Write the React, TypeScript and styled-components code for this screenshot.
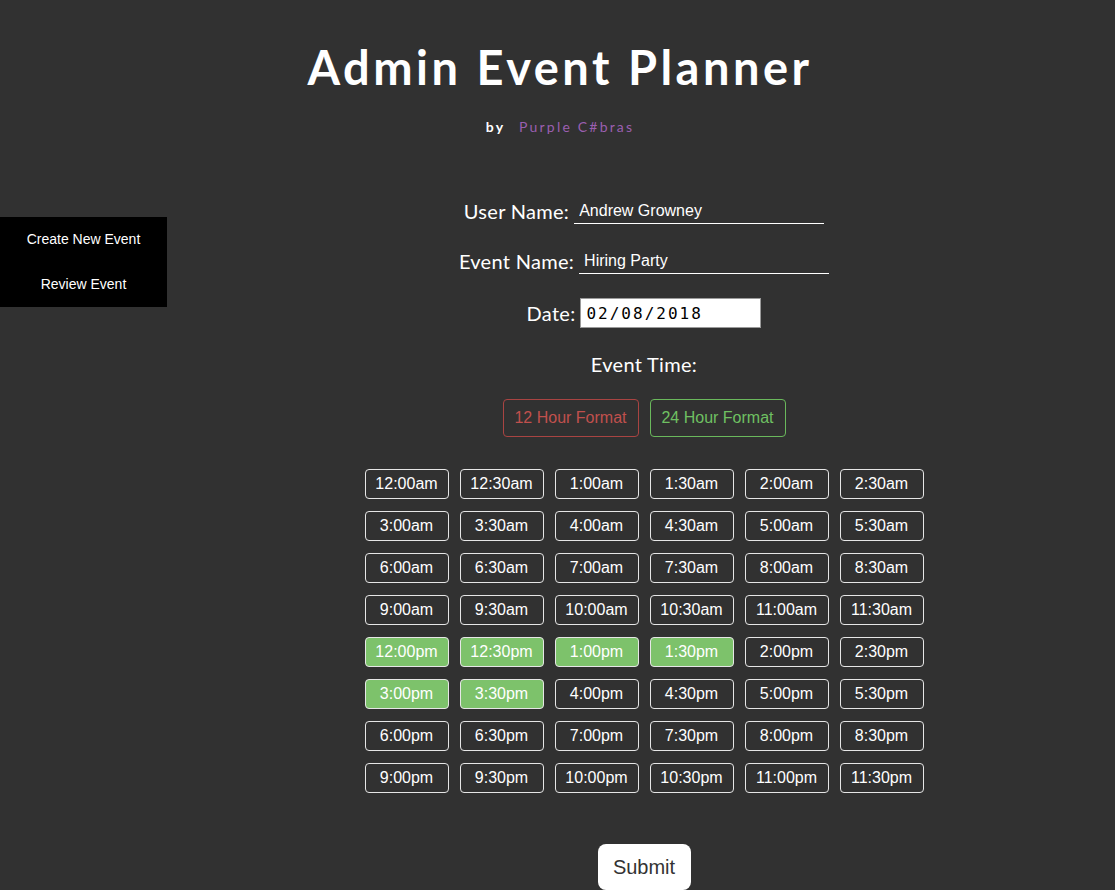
import React from "react";
import styled, { createGlobalStyle } from "styled-components";

const GlobalStyle = createGlobalStyle`
  html, body {
    margin: 0;
    padding: 0;
    background: #313131;
  }
  body {
    font-family: "Liberation Sans", Arial, sans-serif;
    color: #ffffff;
    min-height: 890px;
  }
`;

const Page = styled.div`
  width: 100%;
  min-height: 890px;
  background: #313131;
  overflow: hidden;
`;

const Header = styled.header`
  display: flex;
  flex-direction: column;
  align-items: center;
  padding: 38px 0 0 5px;
`;

const Title = styled.h1`
  margin: 0;
  font-family: "Lato", "Noto Sans", sans-serif;
  font-weight: 700;
  font-size: 47px;
  line-height: 58px;
  letter-spacing: 3.5px;
  color: #ffffff;
`;

const Byline = styled.p`
  margin: 22px 0 0 0;
  font-family: "Lato", "Noto Sans", sans-serif;
  font-size: 14px;
  font-weight: 700;
  letter-spacing: 2.2px;
  line-height: 18px;
  color: #ffffff;
`;

const Team = styled.span`
  margin-left: 8px;
  color: #9b5fb0;
  font-weight: 400;
`;

const Body = styled.div`
  display: flex;
  align-items: flex-start;
  margin-top: 62px;
`;

const Sidebar = styled.nav`
  width: 167px;
  flex: none;
  margin-top: 19px;
  background: #000000;
  display: flex;
  flex-direction: column;
`;

const NavItem = styled.a`
  display: block;
  height: 45px;
  line-height: 45px;
  text-align: center;
  font-family: "Liberation Sans", Arial, sans-serif;
  font-size: 14px;
  color: #ffffff;
  text-decoration: none;
  cursor: pointer;
`;

const Main = styled.main`
  flex: 1;
  padding-left: 6px;
  display: flex;
  flex-direction: column;
  align-items: center;
`;

const FieldRow = styled.div<{ $gap: number }>`
  display: flex;
  align-items: center;
  margin-top: ${(p) => p.$gap}px;
`;

const Label = styled.label`
  font-family: "Lato", "Noto Sans", sans-serif;
  font-size: 20px;
  letter-spacing: 0.3px;
  color: #ffffff;
  margin-right: 5px;
`;

const LineInput = styled.input`
  width: 250px;
  height: 26px;
  box-sizing: border-box;
  background: transparent;
  border: none;
  border-bottom: 1px solid #ffffff;
  padding: 0 5px;
  font-family: "Liberation Sans", Arial, sans-serif;
  font-size: 16px;
  color: #ffffff;
  outline: none;
`;

const DateInput = styled.input`
  width: 181px;
  height: 30px;
  box-sizing: border-box;
  background: #ffffff;
  border: 1px solid #9a9a9a;
  padding: 0 5px;
  font-family: "DejaVu Sans Mono", "Liberation Mono", monospace;
  font-size: 16px;
  letter-spacing: 2px;
  color: #000000;
  outline: none;
`;

const SectionLabel = styled.div`
  margin-top: 24px;
  font-family: "Lato", "Noto Sans", sans-serif;
  font-size: 20px;
  line-height: 24px;
  letter-spacing: 0.3px;
  color: #ffffff;
`;

const FormatRow = styled.div`
  display: flex;
  gap: 11px;
  margin-top: 23px;
`;

const FormatButton = styled.button<{ $tone: "red" | "green" }>`
  width: 136px;
  height: 38px;
  border-radius: 4px;
  background: transparent;
  border: 1px solid ${(p) => (p.$tone === "red" ? "#a94442" : "#6ab85c")};
  color: ${(p) => (p.$tone === "red" ? "#c0504d" : "#6fc062")};
  font-family: "Liberation Sans", Arial, sans-serif;
  font-size: 16px;
  padding: 0;
  cursor: pointer;
`;

const TimeGrid = styled.div`
  display: grid;
  grid-template-columns: repeat(6, 84px);
  grid-auto-rows: 30px;
  column-gap: 11px;
  row-gap: 12px;
  margin-top: 32px;
`;

const TimeButton = styled.button<{ $selected: boolean }>`
  box-sizing: border-box;
  height: 30px;
  border-radius: 4px;
  border: 1px solid #e6e6e6;
  background: ${(p) => (p.$selected ? "#7dc26b" : "transparent")};
  color: #ffffff;
  font-family: "Liberation Sans", Arial, sans-serif;
  font-size: 16px;
  padding: 0;
  cursor: pointer;
`;

const SubmitButton = styled.button`
  margin-top: 51px;
  width: 93px;
  height: 46px;
  border: none;
  border-radius: 8px;
  background: #ffffff;
  color: #333333;
  font-family: "Liberation Sans", Arial, sans-serif;
  font-size: 20px;
  padding: 0;
  cursor: pointer;
`;

const selected = new Set(["12:00pm", "12:30pm", "1:00pm", "1:30pm", "3:00pm", "3:30pm"]);

const times: string[] = [];
for (const suffix of ["am", "pm"]) {
  for (let i = 0; i < 12; i++) {
    const h = i === 0 ? 12 : i;
    times.push(`${h}:00${suffix}`);
    times.push(`${h}:30${suffix}`);
  }
}

export default function App() {
  return (
    <Page>
      <GlobalStyle />
      <Header>
        <Title>Admin Event Planner</Title>
        <Byline>
          by<Team> Purple C#bras</Team>
        </Byline>
      </Header>
      <Body>
        <Sidebar>
          <NavItem>Create New Event</NavItem>
          <NavItem>Review Event</NavItem>
        </Sidebar>
        <Main>
          <FieldRow $gap={0}>
            <Label>User Name:</Label>
            <LineInput defaultValue="Andrew Growney" />
          </FieldRow>
          <FieldRow $gap={24}>
            <Label>Event Name:</Label>
            <LineInput defaultValue="Hiring Party" />
          </FieldRow>
          <FieldRow $gap={24}>
            <Label>Date:</Label>
            <DateInput readOnly defaultValue="02/08/2018" />
          </FieldRow>
          <SectionLabel>Event Time:</SectionLabel>
          <FormatRow>
            <FormatButton $tone="red">12 Hour Format</FormatButton>
            <FormatButton $tone="green">24 Hour Format</FormatButton>
          </FormatRow>
          <TimeGrid>
            {times.map((t) => (
              <TimeButton key={t} $selected={selected.has(t)}>
                {t}
              </TimeButton>
            ))}
          </TimeGrid>
          <SubmitButton>Submit</SubmitButton>
        </Main>
      </Body>
    </Page>
  );
}
